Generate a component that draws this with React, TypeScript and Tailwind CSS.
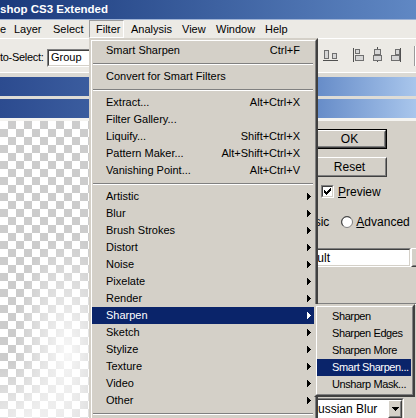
import React from "react"

type Item = { label: string; shortcut?: string; sub?: boolean; active?: boolean } | "sep" | "gap"

const filterItems: Item[] = [
  { label: "Smart Sharpen", shortcut: "Ctrl+F" },
  "sep",
  { label: "Convert for Smart Filters" },
  "sep",
  { label: "Extract...", shortcut: "Alt+Ctrl+X" },
  { label: "Filter Gallery..." },
  { label: "Liquify...", shortcut: "Shift+Ctrl+X" },
  { label: "Pattern Maker...", shortcut: "Alt+Shift+Ctrl+X" },
  { label: "Vanishing Point...", shortcut: "Alt+Ctrl+V" },
  "sep",
  { label: "Artistic", sub: true },
  { label: "Blur", sub: true },
  { label: "Brush Strokes", sub: true },
  { label: "Distort", sub: true },
  { label: "Noise", sub: true },
  { label: "Pixelate", sub: true },
  { label: "Render", sub: true },
  { label: "Sharpen", sub: true, active: true },
  { label: "Sketch", sub: true },
  { label: "Stylize", sub: true },
  { label: "Texture", sub: true },
  { label: "Video", sub: true },
  { label: "Other", sub: true },
  "sep",
  "gap",
]

const sharpenItems: Item[] = [
  { label: "Sharpen" },
  { label: "Sharpen Edges" },
  { label: "Sharpen More" },
  { label: "Smart Sharpen...", active: true },
  { label: "Unsharp Mask..." },
]

function Arrow({ white }: { white?: boolean }) {
  return (
    <svg width="4" height="7" viewBox="0 0 4 7" shapeRendering="crispEdges" className={white ? "fill-white" : "fill-black"}>
      <rect x="0" y="0" width="1" height="7" />
      <rect x="1" y="1" width="1" height="5" />
      <rect x="2" y="2" width="1" height="3" />
      <rect x="3" y="3" width="1" height="1" />
    </svg>
  )
}

function MenuList({ items, rowClass, endPad }: { items: Item[]; rowClass: string; endPad: string }) {
  return (
    <div className="border-2 border-t-[#d4d0c8] border-l-[#d4d0c8] border-r-[#404040] border-b-[#404040] bg-[#d4d0c8]">
      <div className="border border-t-white border-l-white border-r-[#808080] border-b-[#808080] py-[1px] pr-[1px]">
        {items.map((it, i) =>
          it === "sep" ? (
            <div key={i} className="h-[9px] flex flex-col justify-center px-[1px]">
              <div className="h-[1px] bg-[#808080]" />
              <div className="h-[1px] bg-white" />
            </div>
          ) : it === "gap" ? (
            <div key={i} className="h-[17px]" />
          ) : (
            <div
              key={i}
              className={
                "h-[17px] flex items-center justify-between whitespace-nowrap " +
                rowClass +
                (it.sub ? " pr-[3px]" : " " + endPad) +
                (it.active ? " bg-[#0a246a] text-white" : " text-black")
              }
            >
              <span>{it.label}</span>
              {it.shortcut && <span>{it.shortcut}</span>}
              {it.sub && <Arrow white={it.active} />}
            </div>
          )
        )}
      </div>
    </div>
  )
}

function Raised({ children, className }: { children: React.ReactNode; className?: string }) {
  return (
    <div className={"border border-t-white border-l-white border-r-[#404040] border-b-[#404040] bg-[#d4d0c8] " + (className ?? "")}>
      <div className="w-full h-full border border-t-[#d4d0c8] border-l-[#d4d0c8] border-r-[#808080] border-b-[#808080] flex items-center justify-center">
        {children}
      </div>
    </div>
  )
}

function Sunken({ children, className }: { children: React.ReactNode; className?: string }) {
  return (
    <div className={"border border-t-[#808080] border-l-[#808080] border-r-white border-b-white " + (className ?? "")}>
      <div className="w-full h-full border border-t-[#404040] border-l-[#404040] border-r-[#d4d0c8] border-b-[#d4d0c8] bg-white flex items-center overflow-hidden">
        {children}
      </div>
    </div>
  )
}

function DropArrow() {
  return (
    <svg width="7" height="4" viewBox="0 0 7 4" shapeRendering="crispEdges" className="fill-black">
      <rect x="0" y="0" width="7" height="1" />
      <rect x="1" y="1" width="5" height="1" />
      <rect x="2" y="2" width="3" height="1" />
      <rect x="3" y="3" width="1" height="1" />
    </svg>
  )
}

function AlignIcons() {
  const box = "fill-[#d6d6d6] stroke-[#6f6f6f]"
  return (
    <svg width="93" height="20" viewBox="0 0 93 20" shapeRendering="crispEdges">
      {/* align bottom */}
      <rect x="1.5" y="4.5" width="4" height="8" className={box} />
      <rect x="9.5" y="7.5" width="4" height="5" className={box} />
      <rect x="0" y="14" width="15" height="1" className="fill-[#505050]" />
      {/* align left */}
      <rect x="30" y="2" width="1" height="14" className="fill-[#505050]" />
      <rect x="32.5" y="3.5" width="4" height="4" className={box} />
      <rect x="32.5" y="9.5" width="8" height="5" className={box} />
      {/* align center */}
      <rect x="54" y="1" width="1" height="15" className="fill-[#505050]" />
      <rect x="51.5" y="3.5" width="6" height="5" className={box} />
      <rect x="50.5" y="9.5" width="8" height="5" className={box} />
      {/* align right */}
      <rect x="77" y="2" width="1" height="14" className="fill-[#505050]" />
      <rect x="72.5" y="3.5" width="4" height="5" className={box} />
      <rect x="68.5" y="9.5" width="8" height="5" className={box} />
      {/* separator */}
      <rect x="91" y="0" width="1" height="20" className="fill-[#9a9a9a]" />
      <rect x="92" y="0" width="1" height="20" className="fill-white" />
    </svg>
  )
}

export default function App() {
  return (
    <div className="relative w-[416px] h-[418px] overflow-hidden bg-[#d4d0c8] font-['Liberation_Sans',Arial,sans-serif] text-[11px] text-black">
      {/* Title bar */}
      <div className="h-[20px] bg-gradient-to-r from-[#1b397b] to-[#6088c4] flex items-center border-b border-[#9fb3d6]">
        <span className="text-white font-bold text-[11.5px] leading-none">shop CS3 Extended</span>
      </div>

      {/* Menu bar */}
      <div className="h-[18px] bg-[#eceae5] flex items-center whitespace-nowrap">
        <span className="w-[7px]">e</span>
        <span className="w-[39px] pl-[7px]">Layer</span>
        <span className="w-[43px] pl-[7px]">Select</span>
        <span className="w-[35px] h-[18px] pl-[6px] flex items-center border border-t-[#9d9d9d] border-l-[#9d9d9d] border-r-white border-b-white">Filter</span>
        <span className="w-[51px] pl-[7px]">Analysis</span>
        <span className="w-[34px] pl-[7px]">View</span>
        <span className="w-[49px] pl-[7px]">Window</span>
        <span className="pl-[7px]">Help</span>
      </div>

      {/* Options bar */}
      <div className="h-[35px] bg-[#eceae5] border-t border-white border-b flex items-center pt-[4px]">
        <span className="w-[47px] tracking-[-0.3px] whitespace-nowrap">to-Select:</span>
        <Sunken className="w-[80px] h-[18px] shrink-0">
          <span className="pl-[2px]">Group</span>
        </Sunken>
        <div className="ml-auto mb-[3px]">
          <AlignIcons />
        </div>
      </div>
      <div className="h-[4px] bg-[#dcdad4]" />

      {/* Document / dialog title bars */}
      <div className="h-[19px] bg-gradient-to-r from-[#2c4b8f] via-[#6389c6] via-75% to-[#a9c6ec]" />
      <div className="h-[3px] bg-[#dedcd6]" />
      <div className="h-[19px] bg-gradient-to-r from-[#2c4b8f] via-[#6389c6] via-75% to-[#a9c6ec]" />
      <div className="h-[3px] bg-[#f4f3f0]" />

      {/* Content */}
      <div className="flex h-[297px]">
        <div className="relative w-[90px] shrink-0 border-r border-[#a9a9a9] bg-[conic-gradient(#cccccc_25%,#ffffff_0_50%,#cccccc_0_75%,#ffffff_0)] bg-[length:16px_16px]">
          <div className="absolute inset-0 bg-[radial-gradient(ellipse_60%_40%_at_75%_78%,rgba(255,255,255,0.85),rgba(255,255,255,0)_100%)]" />
          <div className="absolute inset-0 bg-[radial-gradient(ellipse_90%_20%_at_30%_100%,rgba(255,255,255,0.7),rgba(255,255,255,0)_100%)]" />
        </div>

        <div className="flex-1 min-w-0 overflow-hidden flex flex-col text-[12px]">
          <div className="flex flex-col items-end pr-[29px] pt-[8px] gap-[8px]">
            <div className="w-[75px] h-[20px] border border-black">
              <Raised className="w-full h-full">OK</Raised>
            </div>
            <Raised className="w-[75px] h-[20px]">Reset</Raised>
          </div>

          <div className="ml-[231px] mt-[8px] flex items-center gap-[4px] h-[13px]">
            <Sunken className="w-[13px] h-[13px] shrink-0">
              <svg width="9" height="9" viewBox="0 0 9 9" shapeRendering="crispEdges" className="fill-black">
                <path d="M1 3h1v1h1v1h1V4h1V3h1V2h1V1h1v3H7v1H6v1H5v1H4v1H3V7H2V6H1z" />
              </svg>
            </Sunken>
            <span>
              <span className="underline">P</span>review
            </span>
          </div>

          <div className="ml-[194px] mt-[17px] flex items-center h-[13px] whitespace-nowrap">
            <svg width="12" height="12" viewBox="0 0 12 12" className="shrink-0">
              <circle cx="6" cy="6" r="5.5" className="fill-white stroke-[#808080]" />
            </svg>
            <span className="ml-[4px]">Basic</span>
            <svg width="12" height="12" viewBox="0 0 12 12" className="ml-[12px] shrink-0">
              <circle cx="6" cy="6" r="5.5" className="fill-white stroke-[#808080]" />
              <path d="M2.2 9.8A5.4 5.4 0 0 1 2.2 2.2 5.4 5.4 0 0 1 9.8 2.2" className="fill-none stroke-[#404040]" />
            </svg>
            <span className="ml-[3px]">
              <span className="underline">A</span>dvanced
            </span>
          </div>

          <div className="ml-[198px] mt-[20px] flex">
            <Sunken className="w-[123px] h-[19px] shrink-0">
              <span className="pl-[2px]">Default</span>
            </Sunken>
            <Raised className="w-[17px] h-[19px] shrink-0">
              <DropArrow />
            </Raised>
          </div>

          <div className="mt-[36px] ml-[223px]">
            <div className="h-[1px] bg-[#808080]" />
            <div className="h-[1px] bg-white" />
          </div>

          <div className="ml-[208px] mt-[93px] flex">
            <Sunken className="w-[106px] h-[22px] shrink-0">
              <span className="pl-[2px] whitespace-nowrap">Gaussian Blur</span>
              <Raised className="ml-auto w-[14px] h-[18px] shrink-0">
                <DropArrow />
              </Raised>
            </Sunken>
          </div>
        </div>
      </div>

      {/* Filter menu */}
      <div className="absolute left-[89px] top-[38px] w-[229px]">
        <MenuList items={filterItems} rowClass="pl-[14px]" endPad="pr-[14px]" />
      </div>

      {/* Sharpen submenu */}
      <div className="absolute left-[314px] top-[304px] w-[101px]">
        <MenuList items={sharpenItems} rowClass="pl-[15px] tracking-[-0.4px]" endPad="pr-[2px]" />
      </div>
    </div>
  )
}
